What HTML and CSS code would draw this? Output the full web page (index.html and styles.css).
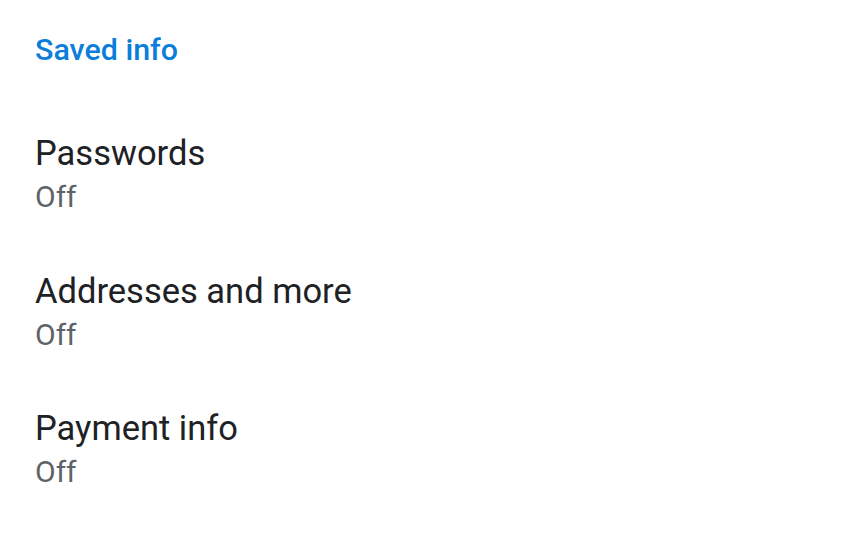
FILE: index.html
```html
<!DOCTYPE html>
<html>
<head>
<meta charset="utf-8">
<link rel="stylesheet" href="styles.css">
</head>
<body>
<div class="page">
  <div class="header">Saved info</div>
  <div class="item">
    <div class="title">Passwords</div>
    <div class="sub">Off</div>
  </div>
  <div class="item">
    <div class="title">Addresses and more</div>
    <div class="sub">Off</div>
  </div>
  <div class="item">
    <div class="title">Payment info</div>
    <div class="sub">Off</div>
  </div>
</div>
</body>
</html>
```
FILE: styles.css
```css
html, body {
  margin: 0;
  padding: 0;
  background: #ffffff;
}
.page {
  font-family: Roboto, "Noto Sans", sans-serif;
  padding: 28px 35px 0 35px;
}
.header {
  font-size: 30.4px;
  font-weight: 500;
  color: #0b7ddb;
  line-height: 44px;
  margin-bottom: 60px;
}
.item {
  display: flex;
  flex-direction: column;
  padding-bottom: 52.5px;
}
.title {
  font-size: 34.5px;
  color: #202124;
  line-height: 42px;
}
.sub {
  font-size: 30px;
  color: #5f6368;
  line-height: 40px;
  margin-top: 3px;
}
```
